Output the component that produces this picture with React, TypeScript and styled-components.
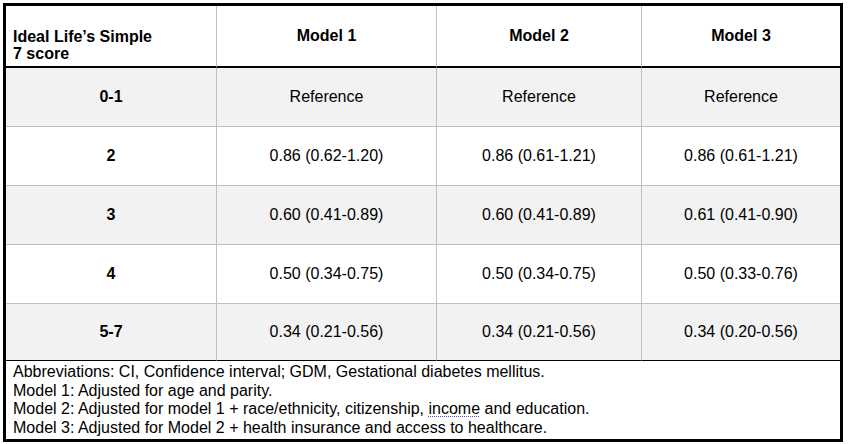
import React from 'react';
import styled, { createGlobalStyle } from 'styled-components';

const GlobalStyle = createGlobalStyle`
  html, body {
    margin: 0;
    padding: 0;
    background: #ffffff;
  }

  body {
    font-family: 'Liberation Sans', Arial, sans-serif;
    color: #000000;
  }
`;

const Page = styled.div`
  padding: 3px 0 0 3px;
`;

const Table = styled.div`
  width: 840px;
  box-sizing: border-box;
  border: 3px solid #000000;
  display: grid;
  grid-template-columns: 211px 220px 205px 198px;
  grid-template-rows: 62px repeat(4, 59px) 57px 78px;
`;

const Cell = styled.div<{
  $head?: boolean;
  $bold?: boolean;
  $shade?: boolean;
  $last?: boolean;
  $endRow?: boolean;
}>`
  box-sizing: border-box;
  display: flex;
  align-items: center;
  justify-content: center;
  font-size: 16px;
  font-weight: ${(p) => (p.$head || p.$bold ? 700 : 400)};
  background: ${(p) => (p.$shade ? '#f2f2f2' : '#ffffff')};
  border-right: ${(p) => (p.$last ? 'none' : '1px solid #bfbfbf')};
  border-bottom: ${(p) =>
    p.$head ? '2px solid #000000' : p.$endRow ? '1px solid #000000' : '1px solid #bfbfbf'};
`;

const CornerCell = styled(Cell)`
  justify-content: flex-start;
  align-items: flex-end;
  padding: 0 0 4px 7px;
  line-height: 17px;
`;

const Notes = styled.div`
  grid-column: 1 / -1;
  padding: 2px 0 0 7px;
  font-size: 16px;
  line-height: 18.5px;
`;

const Flagged = styled.span`
  text-decoration: underline dotted #4b4bf0;
  text-decoration-thickness: 1px;
  text-underline-offset: 2px;
`;

const rows = [
  { score: '0-1', values: ['Reference', 'Reference', 'Reference'] },
  { score: '2', values: ['0.86 (0.62-1.20)', '0.86 (0.61-1.21)', '0.86 (0.61-1.21)'] },
  { score: '3', values: ['0.60 (0.41-0.89)', '0.60 (0.41-0.89)', '0.61 (0.41-0.90)'] },
  { score: '4', values: ['0.50 (0.34-0.75)', '0.50 (0.34-0.75)', '0.50 (0.33-0.76)'] },
  { score: '5-7', values: ['0.34 (0.21-0.56)', '0.34 (0.21-0.56)', '0.34 (0.20-0.56)'] },
];

export default function App() {
  return (
    <Page>
      <GlobalStyle />
      <Table>
        <CornerCell $head>
          Ideal Life’s Simple
          <br />7 score
        </CornerCell>
        <Cell $head>Model 1</Cell>
        <Cell $head>Model 2</Cell>
        <Cell $head $last>
          Model 3
        </Cell>

        {rows.map((row, i) => {
          const shade = i % 2 === 0;
          const endRow = i === rows.length - 1;
          return (
            <React.Fragment key={row.score}>
              <Cell $bold $shade={shade} $endRow={endRow}>
                {row.score}
              </Cell>
              {row.values.map((v, j) => (
                <Cell key={j} $shade={shade} $endRow={endRow} $last={j === 2}>
                  {v}
                </Cell>
              ))}
            </React.Fragment>
          );
        })}

        <Notes>
          Abbreviations: CI, Confidence interval; GDM, Gestational diabetes mellitus.
          <br />
          Model 1: Adjusted for age and parity.
          <br />
          Model 2: Adjusted for model 1 + race/ethnicity, citizenship, <Flagged>income</Flagged> and
          education.
          <br />
          Model 3: Adjusted for Model 2 + health insurance and access to healthcare.
        </Notes>
      </Table>
    </Page>
  );
}
